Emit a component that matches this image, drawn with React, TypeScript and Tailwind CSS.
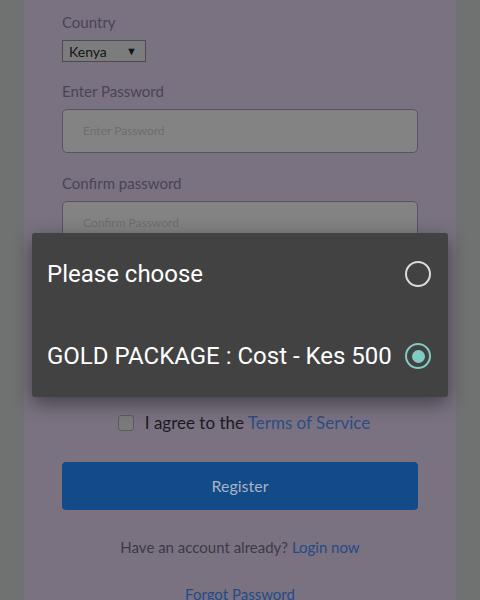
import React from "react";

function Radio({ checked }: { checked: boolean }) {
  return checked ? (
    <div className="flex h-[26px] w-[26px] items-center justify-center rounded-full border-[2.5px] border-[#80cbc4]">
      <div className="h-[13px] w-[13px] rounded-full bg-[#80cbc4]" />
    </div>
  ) : (
    <div className="h-[26px] w-[26px] rounded-full border-[2.5px] border-[#dcdcdc]" />
  );
}

export default function App() {
  return (
    <div className="relative h-[600px] w-[480px] overflow-hidden bg-[#707271] font-['Lato','Open_Sans',sans-serif]">
      <div className="mx-[24px] h-[600px] bg-[#7a7280] px-[38px]">
        <div className="pt-[13px] text-[15px] leading-[18px] text-[#4a4358]">Country</div>
        <div className="mt-[9px] flex h-[22px] w-[84px] items-center justify-between border border-[#4d4a4f] bg-[#7c7c7c] pl-[6px] pr-[8px] text-[14px] text-[#141414]">
          <span>Kenya</span>
          <span className="text-[11px]">▼</span>
        </div>
        <div className="mt-[20px] text-[15px] leading-[18px] text-[#4a4358]">Enter Password</div>
        <div className="mt-[9px] flex h-[44px] items-center rounded-[5px] border border-[#5a5262] bg-[#838383] pl-[20px] text-[12px] text-[#6d6d6d]">
          Enter Password
        </div>
        <div className="mt-[21px] text-[15px] leading-[18px] text-[#4a4358]">Confirm password</div>
        <div className="mt-[9px] flex h-[44px] items-center rounded-[5px] border border-[#5a5262] bg-[#838383] pl-[20px] text-[12px] text-[#6d6d6d]">
          Confirm Password
        </div>
        <div className="h-[167px]" />
        <div className="ml-[8px] flex items-center justify-center gap-[11px]">
          <div className="h-[16px] w-[16px] rounded-[3px] border border-[#5e5a60] bg-[#7b7b7b]" />
          <div className="text-[17px] leading-[22px] text-[#1c1a22]">
            I agree to the <span className="text-[#2c4d86]">Terms of Service</span>
          </div>
        </div>
        <div className="mt-[28px] flex h-[48px] items-center justify-center rounded-[4px] bg-[#134a88] text-[16px] text-[#a7b3c6]">
          Register
        </div>
        <div className="mt-[27px] text-center text-[15px] leading-[20px] text-[#3d3948]">
          Have an account already? <span className="text-[#244a86]">Login now</span>
        </div>
        <div className="mt-[27px] text-center text-[15px] leading-[20px] text-[#244a86]">Forgot Password</div>
      </div>

      <div className="absolute left-[32px] top-[233px] w-[416px] rounded-[3px] bg-[#424242] font-['Roboto',sans-serif] text-white shadow-[0_6px_20px_rgba(0,0,0,0.45)]">
        <div className="flex h-[82px] items-center justify-between pl-[15px] pr-[17px]">
          <span className="text-[24px]">Please choose</span>
          <Radio checked={false} />
        </div>
        <div className="flex h-[82px] items-center justify-between pl-[15px] pr-[17px]">
          <span className="text-[24px]">GOLD PACKAGE : Cost - Kes 500</span>
          <Radio checked={true} />
        </div>
      </div>
    </div>
  );
}
